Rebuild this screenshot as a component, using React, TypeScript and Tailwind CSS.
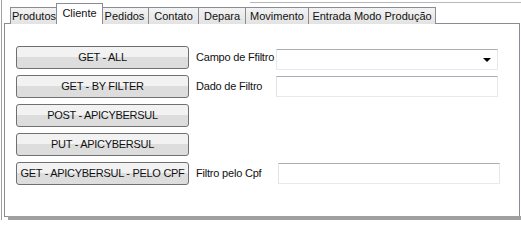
import { ReactNode } from 'react';

const tabs = [
  { label: 'Produtos', w: 'w-[48px]' },
  { label: 'Cliente', w: 'w-[47px]', active: true },
  { label: 'Pedidos', w: 'w-[48px]' },
  { label: 'Contato', w: 'w-[50px]' },
  { label: 'Depara', w: 'w-[47px]' },
  { label: 'Movimento', w: 'w-[63px]' },
  { label: 'Entrada Modo Produção', w: 'w-[127px]' },
];

function WinButton({ children }: { children: ReactNode }) {
  return (
    <button className="h-[23px] w-[173px] whitespace-nowrap rounded-[3px] border border-[#707070] bg-gradient-to-b from-[#f2f2f2] from-50% to-[#dddddd] to-50% text-[11px] tracking-[-0.3px] text-[#111] leading-none">
      {children}
    </button>
  );
}

function TextBox({ className = '' }: { className?: string }) {
  return (
    <div
      className={`h-[21px] w-[222px] shrink-0 border border-[#e3e9ef] border-t-[#abadb3] border-l-[#e2e3ea] bg-white ${className}`}
    />
  );
}

export default function App() {
  return (
    <div
      className="relative h-[220px] w-[521px] overflow-hidden bg-white text-[11px] text-[#111]"
      style={{ fontFamily: '"Liberation Sans", Arial, sans-serif' }}
    >
      <div className="absolute left-[1px] top-0 bottom-0 w-px bg-[#a0a0a0]" />
      <div className="absolute left-[250px] right-0 top-[2px] h-px bg-[#b8b8b8]" />

      {/* Tab strip */}
      <div className="relative z-10 flex h-[24px] items-end pl-[10px] whitespace-nowrap">
        {tabs.map((t) =>
          t.active ? (
            <div
              key={t.label}
              className={`${t.w} relative z-10 -mx-[2px] h-[21px] shrink-0 border border-b-0 border-[#898c95] bg-white pt-[3px] text-center leading-[13px]`}
            >
              {t.label}
            </div>
          ) : (
            <div
              key={t.label}
              className={`${t.w} h-[17px] shrink-0 border border-b-0 border-l-0 first:border-l border-[#898c95] bg-gradient-to-b from-[#f3f3f3] to-[#e3e3e3] pt-[2px] text-center leading-[13px]`}
            >
              {t.label}
            </div>
          )
        )}
      </div>

      {/* Panel */}
      <div className="absolute left-[4px] right-[1px] top-[23px] h-[194px] border border-[#898c95] bg-white pl-[11px] pt-[22px]">
        <div className="flex gap-[6px] whitespace-nowrap">
          <div className="flex flex-col gap-[6px]">
            <WinButton>GET - ALL</WinButton>
            <WinButton>GET - BY FILTER</WinButton>
            <WinButton>POST - APICYBERSUL</WinButton>
            <WinButton>PUT - APICYBERSUL</WinButton>
            <WinButton>GET - APICYBERSUL - PELO CPF</WinButton>
          </div>
          <div className="flex flex-col tracking-[-0.2px]">
            <div className="flex h-[23px] items-center">
              <span className="w-[81px] shrink-0 pl-[1px]">Campo de Ffiltro</span>
              <div className="relative mt-[4px] h-[21px] w-[222px] shrink-0 border border-[#e3e9ef] border-t-[#abadb3] bg-white">
                <div className="absolute right-[6px] top-[8px] h-0 w-0 border-x-[4px] border-t-[4px] border-x-transparent border-t-black" />
              </div>
            </div>
            <div className="mt-[6px] flex h-[23px] items-center">
              <span className="w-[81px] shrink-0 pl-[1px]">Dado de Filtro</span>
              <TextBox />
            </div>
            <div className="mt-[64px] flex h-[23px] items-center">
              <span className="w-[83px] shrink-0 pl-[1px]">Filtro pelo Cpf</span>
              <TextBox />
            </div>
          </div>
        </div>
      </div>

      {/* Bottom control edge */}
      <div className="absolute left-[8px] right-0 bottom-0 h-[4px] bg-[#a0a0a0]" />
    </div>
  );
}
